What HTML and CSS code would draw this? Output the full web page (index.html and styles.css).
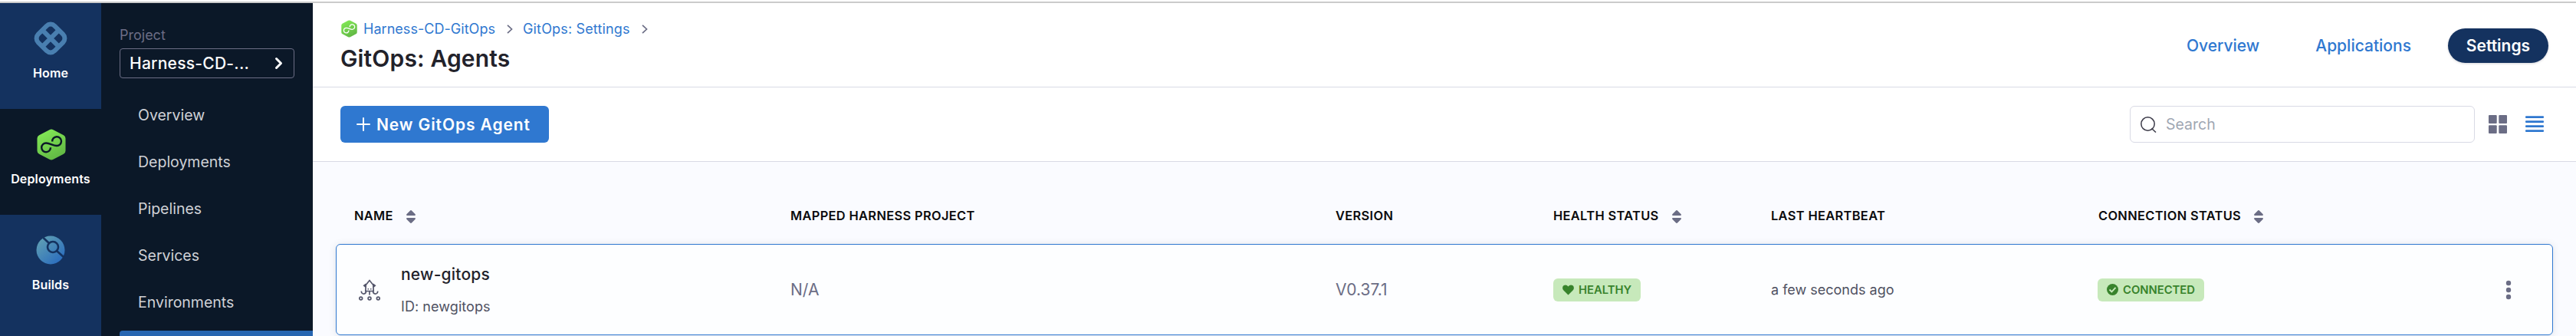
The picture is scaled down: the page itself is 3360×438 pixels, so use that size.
FILE: index.html
```html
<!DOCTYPE html>
<html lang="en">
<head>
<meta charset="utf-8">
<title>GitOps: Agents</title>
<link rel="stylesheet" href="styles.css">
</head>
<body>
<svg width="0" height="0" class="defs" aria-hidden="true">
  <defs>
    <linearGradient id="green" x1="0" y1="0" x2="0.5" y2="1"><stop offset="0" stop-color="#86ee58"/><stop offset="1" stop-color="#63ba45"/></linearGradient>
    <linearGradient id="teal" x1="0.1" y1="0.1" x2="0.8" y2="0.9"><stop offset="0" stop-color="#5f9fb3"/><stop offset="1" stop-color="#2d6fbd"/></linearGradient>
    <symbol id="cd" viewBox="0 0 38 41">
      <path d="M16.5 1.2Q19 -.2 21.500 1.200L35 8.200Q37.500 9.600 37.500 12.500V28.500Q37.500 31.400 35 32.800L21.500 39.800Q19 41.200 16.500 39.800L3 32.800Q.5 31.400 .5 28.500V12.500Q.5 9.600 3 8.200Z" fill="url(#green)"/>
      <path d="M20.200 16.500A5.900 5.900 0 1 1 26 22C21.500 22 17 18.500 12.200 18.500A5.900 5.900 0 1 0 18 24.300" fill="none" stroke="currentColor" stroke-width="2.400"/>
    </symbol>
    <symbol id="sort" viewBox="0 0 12 17"><path d="M6 0Q6.700 0 7.200.7L11.700 5.300Q12.300 7 11 7H1Q-.3 7 .3 5.300L4.800.7Q5.300 0 6 0ZM6 17Q6.700 17 7.200 16.300L11.700 11.700Q12.300 10 11 10H1Q-.3 10 .3 11.700L4.800 16.300Q5.300 17 6 17Z" fill="#6b6d85"/></symbol>
    <symbol id="chev" viewBox="0 0 8 12"><path d="M1 .8L6.500 6L1 11.200" fill="none" stroke="currentColor" stroke-width="1.700"/></symbol>
  </defs>
</svg>
<div class="window-edge"></div>
<div class="app">
  <nav class="modules">
    <a class="module">
      <span class="module-icon"><svg width="46" height="46" viewBox="0 0 46 46"><g transform="rotate(45 23 23)" fill="none" stroke="#497fb0" stroke-width="6"><rect x="7.800" y="7.800" width="30.400" height="30.400" rx="7.500"/><path d="M23 8V38M8 23H38"/></g></svg></span>
      <span>Home</span>
    </a>
    <a class="module active">
      <span class="module-icon"><svg class="cd-dark" width="38" height="41"><use href="#cd"/></svg></span>
      <span>Deployments</span>
    </a>
    <a class="module">
      <span class="module-icon"><svg width="38" height="38" viewBox="0 0 38 38"><circle cx="19" cy="19" r="18.500" fill="url(#teal)"/><g fill="none" stroke="#14325f" stroke-width="2.600"><circle cx="22" cy="15" r="7"/><path d="M17 10L9.500 3M27 20L37 29"/></g></svg></span>
      <span>Builds</span>
    </a>
  </nav>
  <aside class="side">
    <div class="side-label">Project</div>
    <div class="project"><span>Harness-CD-...</span><svg width="12" height="17" viewBox="0 0 12 17"><path d="M2.500 2.500L8.500 8.500L2.500 14.500" fill="none" stroke="#fff" stroke-width="3" stroke-linecap="round" stroke-linejoin="round"/></svg></div>
    <div class="menu">
      <a>Overview</a><a>Deployments</a><a>Pipelines</a><a>Services</a><a>Environments</a><a class="current"></a>
    </div>
  </aside>
  <main class="main">
    <header class="header">
      <div>
        <div class="crumbs">
          <svg class="cd-light" width="21" height="23"><use href="#cd"/></svg>
          <a>Harness-CD-GitOps</a><svg class="chev" width="8" height="12"><use href="#chev"/></svg>
          <a class="crumb2">GitOps: Settings</a><svg class="chev" width="8" height="12"><use href="#chev"/></svg>
        </div>
        <h1>GitOps: Agents</h1>
      </div>
      <div class="tabs"><a>Overview</a><a>Applications</a><a class="pill">Settings</a></div>
    </header>
    <div class="toolbar">
      <button class="new"><svg width="18" height="18" viewBox="0 0 18 18"><path d="M9 1V17M1 9H17" stroke="#fff" stroke-width="2" stroke-linecap="round"/></svg>New GitOps Agent</button>
      <div class="tools">
        <div class="search"><svg width="21" height="21" viewBox="0 0 21 21"><g fill="none" stroke="#3b3a48" stroke-width="1.500"><circle cx="9.500" cy="9.500" r="8.700"/><path d="M14.500 15.500L20 20.500"/></g></svg>Search</div>
        <svg class="view-grid" width="24" height="24" viewBox="0 0 24 24" fill="#6b6d85"><rect width="10.700" height="11" rx="1"/><rect x="13.300" width="10.700" height="11" rx="1"/><rect y="13.300" width="10.700" height="10.700" rx="1"/><rect x="13.300" y="13.300" width="10.700" height="10.700" rx="1"/></svg>
        <svg class="view-list" width="24" height="24" viewBox="0 0 24 24" fill="#2f78d0"><rect y="1.300" width="24" height="2.700" rx="1"/><rect y="7.300" width="24" height="2.700" rx="1"/><rect y="13.300" width="24" height="2.700" rx="1"/><rect y="19.300" width="24" height="2.700" rx="1"/></svg>
      </div>
    </div>
    <section class="content">
      <div class="grid thead">
        <span>NAME<svg width="12" height="17"><use href="#sort"/></svg></span>
        <span>MAPPED HARNESS PROJECT</span>
        <span>VERSION</span>
        <span>HEALTH STATUS<svg width="12" height="17"><use href="#sort"/></svg></span>
        <span>LAST HEARTBEAT</span>
        <span class="conn">CONNECTION STATUS<svg width="12" height="17"><use href="#sort"/></svg></span>
      </div>
      <div class="grid row">
        <div class="agent">
          <svg width="28" height="28" viewBox="0 0 28 28" fill="none" stroke="#54566b" stroke-width="1.700">
            <path d="M9.200 7.500L14 1.500L18.800 7.500L19.200 15.500H8.800ZM9.500 6.200L6.800 8.200L9 10.200M18.500 6.200L21.200 8.200L19 10.200M3.300 15.500C3.300 20.500 9.500 20 9.500 15.500M24.700 15.500C24.700 20.500 18.500 20 18.500 15.500M14 16V20.500"/>
            <path d="M11.500 12.800H13M15 12.800H16.500" stroke-width="1.400"/>
            <circle cx="2.700" cy="25" r="1.900"/><circle cx="14" cy="25" r="1.900"/><circle cx="25.300" cy="25" r="1.900"/>
          </svg>
          <div><div class="agent-name">new-gitops</div><div class="agent-id">ID: newgitops</div></div>
        </div>
        <span class="muted">N/A</span>
        <span class="muted">V0.37.1</span>
        <span><span class="badge"><svg width="15" height="14" viewBox="0 0 15 14"><path d="M7.500 13.500L1.200 7.200C-.5 5.300 0 2.500 1.500 1.300C3.500 -.1 6 .4 7.500 2.500C9 .4 11.500 -.1 13.500 1.300C15 2.500 15.500 5.300 13.800 7.200Z" fill="#38832c"/></svg>HEALTHY</span></span>
        <span class="time">a few seconds ago</span>
        <span class="last"><span class="badge"><svg width="15" height="15" viewBox="0 0 15 15"><circle cx="7.500" cy="7.500" r="7.500" fill="#38832c"/><path d="M3.500 7.500L6.400 10.300L11.500 4.900" fill="none" stroke="#c7e9bb" stroke-width="1.900"/></svg>CONNECTED</span>
          <svg width="8" height="26" viewBox="0 0 8 26" fill="#6b6d85"><circle cx="4" cy="4" r="3.200"/><circle cx="4" cy="13" r="3.200"/><circle cx="4" cy="22" r="3.200"/></svg></span>
      </div>
    </section>
  </main>
</div>
</body>
</html>
```
FILE: styles.css
```css
* { box-sizing: border-box; }
body {
  margin: 0;
  height: 438px;
  overflow: hidden;
  font-family: Inter, "Liberation Sans", sans-serif;
  background: #fff;
  white-space: nowrap;
}
svg { display: block; flex: none; }
.defs { position: absolute; }
.window-edge { height: 4px; border-bottom: 2px solid #cbcbcb; background: #fff; }
.app { display: flex; height: 434px; overflow: hidden; }

.modules { width: 132px; flex: none; background: #14325f; }
.module {
  display: flex;
  flex-direction: column;
  align-items: center;
  height: 138px;
  padding-top: 23px;
  gap: 12px;
  color: #fff;
  font-size: 16px;
  line-height: 20px;
  font-weight: 600;
  letter-spacing: 0.15px;
}
.module.active { background: #0b1828; }
.module-icon { height: 46px; display: flex; align-items: center; }
.cd-dark { color: #0b1828; margin-left: 2px; }
.cd-light { color: #fff; }

.side { width: 276px; flex: none; padding: 31px 0 0 24px; background: #0b1828; overflow: hidden; }
.side-label { font-size: 18px; line-height: 22px; color: #6b6d85; }
.project {
  display: flex;
  align-items: center;
  justify-content: space-between;
  width: 228px;
  height: 39px;
  margin-top: 6px;
  padding: 0 13px 0 12px;
  border: 1px solid #6b6d85;
  border-radius: 4px;
  color: #fff;
  font-size: 21px;
  font-weight: 500;
  letter-spacing: 0.25px;
}
.menu { display: flex; flex-direction: column; gap: 13px; margin-top: 24px; }
.menu a {
  height: 48px;
  padding-left: 24px;
  line-height: 48px;
  font-size: 19.5px;
  color: #cfd1d6;
}
.menu .current { height: 7px; background: #2766b1; border-radius: 4px 0 0 0; }

.main { flex: 1; display: flex; flex-direction: column; background: #fafbff; }
.header {
  display: flex;
  justify-content: space-between;
  height: 110px;
  padding: 20px 36px 0;
  border-bottom: 1px solid #d9dae5;
  background: #fff;
}
.crumbs { display: flex; align-items: center; height: 27px; padding-left: 1px; font-size: 18px; color: #2f78d0; }
.crumbs a { margin-left: 8px; letter-spacing: 0.04px; }
.crumbs .crumb2 { margin-left: 13px; letter-spacing: 0.16px; }
.chev { color: #6b6d85; margin-left: 15px; }
h1 { margin: 7px 0 0; font-size: 30px; line-height: 36px; font-weight: 600; letter-spacing: 0.14px; color: #22222a; }
.tabs {
  display: flex;
  align-items: center;
  height: 45px;
  margin-top: 13px;
  font-size: 21px;
  font-weight: 500;
  color: #2f78d0;
}
.tabs a { margin-right: 73px; }
.tabs a:nth-child(2) { margin-right: 48px; }
.tabs .pill {
  width: 131px;
  height: 45px;
  margin-right: 0;
  line-height: 45px;
  text-align: center;
  border-radius: 22.5px;
  background: #14325f;
  color: #fff;
  font-weight: 600;
  box-shadow: 0 1px 3px rgba(40, 41, 61, 0.2);
}

.toolbar {
  display: flex;
  align-items: center;
  justify-content: space-between;
  height: 97px;
  padding: 0 42px 0 36px;
  border-bottom: 1px solid #d9dae5;
  background: #fff;
}
.new {
  display: flex;
  align-items: center;
  gap: 8px;
  width: 272px;
  height: 48px;
  padding: 0 0 0 21px;
  border: 0;
  border-radius: 6px;
  background: #2f78d0;
  color: #fff;
  font: 600 21px Inter, "Liberation Sans", sans-serif;
  letter-spacing: 0.9px;
}
.tools { display: flex; align-items: center; }
.search {
  display: flex;
  align-items: center;
  gap: 12px;
  width: 450px;
  height: 48px;
  padding-left: 13px;
  border: 1px solid #d9dae5;
  border-radius: 6px;
  font-size: 19.5px;
  color: #9fa7b3;
}
.view-grid { margin-left: 18px; }
.view-list { margin-left: 24px; }

.content { padding: 52px 30px 0; }
.grid { display: grid; grid-template-columns: 569px 711px 284px 284px 426px 1fr; align-items: center; }
.thead {
  height: 36px;
  padding-left: 24px;
  font-size: 16.4px;
  font-weight: 600;
  letter-spacing: 0.35px;
  color: #0b0b0d;
}
.thead span { display: flex; align-items: center; gap: 17px; }
.thead svg { margin-top: 3px; }
.thead .conn { padding-left: 1px; }
.row {
  height: 119px;
  margin-top: 19px;
  padding-left: 23px;
  border: 1px solid #2f78d0;
  border-radius: 6px;
  background: #fdfeff;
  box-shadow: 0 1px 10px rgba(96, 97, 112, 0.16);
}
.agent { display: flex; align-items: center; gap: 27px; padding-left: 6px; }
.agent-name { font-size: 21px; line-height: 26px; font-weight: 500; letter-spacing: 0.2px; color: #22222a; }
.agent-id { margin-top: 18px; font-size: 18px; line-height: 22px; letter-spacing: 0.07px; color: #4f5162; }
.muted { font-size: 21px; color: #6b6d85; }
.time { font-size: 18px; color: #4f5162; }
.badge {
  display: inline-flex;
  align-items: center;
  gap: 6px;
  height: 30px;
  padding: 0 12px;
  border-radius: 6px;
  background: #c7e9bb;
  color: #38832c;
  font-size: 14.8px;
  font-weight: 600;
}
.last { display: flex; align-items: center; justify-content: space-between; padding-right: 53px; }
```
